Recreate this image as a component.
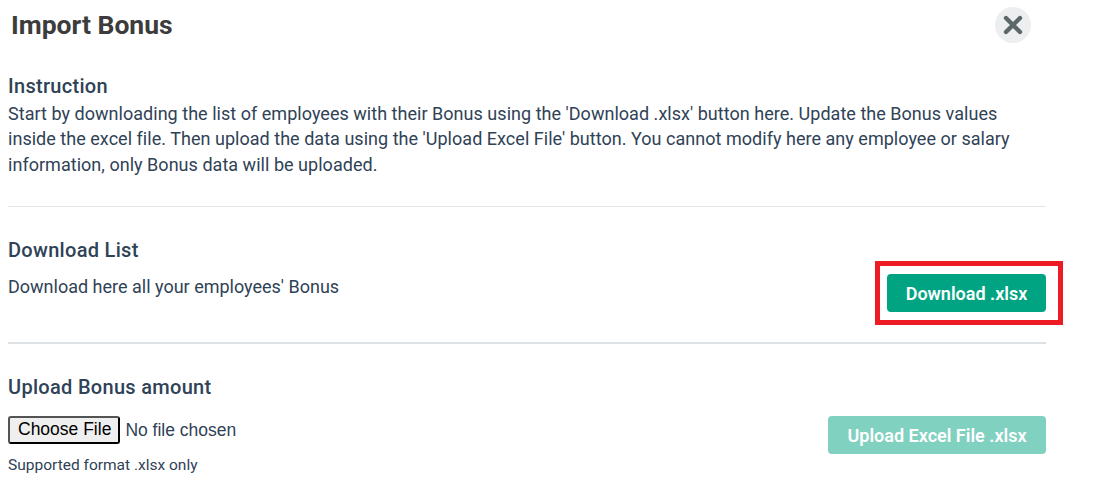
<div class="modal">
  <header class="head">
    <h1>Import Bonus</h1>
    <button class="close" aria-label="Close">
      <svg width="20" height="20" viewBox="0 0 20 20">
        <path d="M3 3 L17 17 M17 3 L3 17" stroke="#5c6768" stroke-width="4.4" stroke-linecap="round" fill="none" />
      </svg>
    </button>
  </header>

  <section class="instruction">
    <h2>Instruction</h2>
    <p>Start by downloading the list of employees with their Bonus using the 'Download .xlsx' button here. Update the Bonus values inside the excel file. Then upload the data using the 'Upload Excel File' button. You cannot modify here any employee or salary information, only Bonus data will be uploaded.</p>
  </section>

  <section class="download">
    <h2>Download List</h2>
    <div class="row">
      <p>Download here all your employees' Bonus</p>
      <div class="highlight">
        <button class="btn">Download .xlsx</button>
      </div>
    </div>
  </section>

  <section class="upload">
    <h2>Upload Bonus amount</h2>
    <div class="row">
      <div>
        <input class="file" type="file" accept=".xlsx" />
        <small>Supported format .xlsx only</small>
      </div>
      <button class="btn disabled" disabled>Upload Excel File .xlsx</button>
    </div>
  </section>
</div>

<style>
  :global(body) {
    background: #fff;
    font-family: Roboto, sans-serif;
    color: #2f4256;
  }

  .modal {
    width: 1038px;
    padding-left: 8px;
  }

  .head {
    display: flex;
    justify-content: space-between;
    align-items: center;
    height: 50px;
    padding-right: 15px;
  }

  h1 {
    margin: 0 0 2px 3px;
    font-size: 26.5px;
    font-weight: 700;
    color: #3c3c3c;
  }

  .close {
    width: 36px;
    height: 36px;
    border: none;
    border-radius: 50%;
    background: #eceef0;
    display: flex;
    align-items: center;
    justify-content: center;
    padding: 0;
  }

  h2 {
    margin: 0;
    font-size: 20px;
    font-weight: 500;
    line-height: 24px;
    letter-spacing: 0.3px;
    color: #2f4256;
  }

  p {
    margin: 0;
    font-size: 18px;
    line-height: 25.5px;
    color: #2f4256;
  }

  .instruction {
    padding-top: 24px;
    padding-bottom: 29.1px;
    border-bottom: 1px solid #e3e5e8;
  }

  .instruction p {
    margin-top: 3px;
    max-width: 1030px;
    line-height: 25.3px;
    letter-spacing: 0.03px;
  }

  .download {
    padding-top: 31px;
    padding-bottom: 30px;
    border-bottom: 2px solid #dee2e6;
  }

  .row {
    display: flex;
    justify-content: space-between;
    align-items: flex-start;
  }

  .download .row {
    margin-top: 12px;
  }

  .upload .row {
    margin-top: 17px;
  }

  /* red annotation frame around the download button */
  .highlight {
    position: relative;
    display: flex;
  }

  .highlight::after {
    content: '';
    position: absolute;
    left: -12px;
    right: -17px;
    top: -13px;
    bottom: -13px;
    border: 5px solid #ed1c24;
  }

  .btn {
    height: 38px;
    width: 159px;
    border: none;
    border-radius: 4px;
    background: #00a482;
    color: #fff;
    font-family: Roboto, sans-serif;
    font-size: 18px;
    font-weight: 600;
    padding: 1px 0 0;
  }

  .btn.disabled {
    width: 218px;
    background: #80d1c0;
  }

  .upload {
    padding-top: 31px;
  }

  .file {
    display: block;
    font-family: "Liberation Sans", Arial, sans-serif;
    font-size: 17.5px;
    color: #2f4256;
  }

  .file::file-selector-button {
    color: #000;
    height: 28px;
    padding: 0 7px 0 8px;
    border: 2px outset #000;
    border-radius: 3px;
    margin-right: 5px;
  }

  small {
    display: block;
    margin-top: 12px;
    font-size: 15.5px;
  }
</style>
